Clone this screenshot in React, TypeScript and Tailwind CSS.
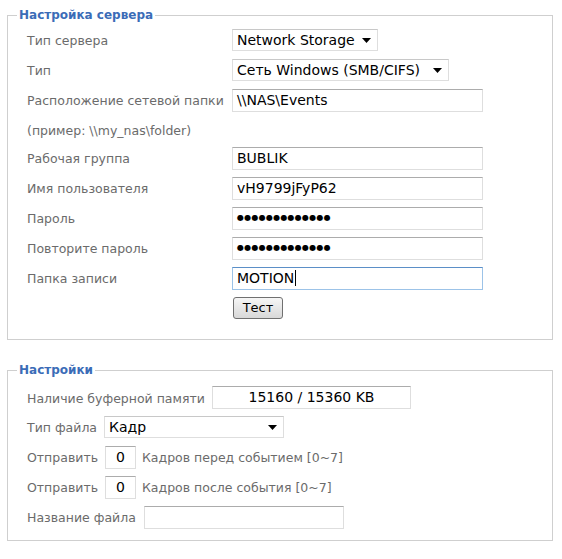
import React from "react";

const font = { fontFamily: '"DejaVu Sans", Verdana, sans-serif' };

function Caret() {
  return (
    <svg width="9" height="5" viewBox="0 0 9 5" className="shrink-0">
      <path d="M0 0h9L4.5 5z" fill="#000" />
    </svg>
  );
}

function Select({ value, className }: { value: string; className: string }) {
  return (
    <div
      className={`flex h-[22px] items-center justify-between border border-[#dedede] border-t-[#c8c8c8] bg-white pl-[4px] pr-[6px] text-[14px] text-black ${className}`}
    >
      <span className="whitespace-nowrap">{value}</span>
      <Caret />
    </div>
  );
}

function Field({
  children,
  className = "",
  focused = false,
}: {
  children?: React.ReactNode;
  className?: string;
  focused?: boolean;
}) {
  return (
    <div
      className={`flex h-[23px] items-center border bg-white px-[4px] text-[14px] text-black ${
        focused
          ? "border-[#9cc3e8] border-t-[#5b8fc7]"
          : "border-[#dedede] border-t-[#acacac]"
      } ${className}`}
    >
      {children}
    </div>
  );
}

function Dots() {
  return (
    <span className="text-[8px] leading-none tracking-[0.25px]">
      {"●●●●●●●●●●●●●"}
    </span>
  );
}

function Label({ w, children }: { w: string; children: React.ReactNode }) {
  return <span className={`${w} shrink-0 whitespace-nowrap pt-[3px]`}>{children}</span>;
}

function Row({ label, children }: { label: string; children: React.ReactNode }) {
  return (
    <div className="flex h-[30px] items-center">
      <Label w="w-[205px]">{label}</Label>
      {children}
    </div>
  );
}

function Legend({ children }: { children: React.ReactNode }) {
  return (
    <legend className="ml-[9px] px-[2px] text-[12px] font-bold leading-[16px] text-[#3b6cb7]">
      {children}
    </legend>
  );
}

export default function App() {
  return (
    <div className="min-h-[559px] bg-white pt-[7px] text-[12.5px] text-[#6b6b6b]" style={font}>
      <fieldset className="ml-[7px] w-[546px] border border-[#cfcfcf] pb-[16px]">
        <Legend>Настройка сервера</Legend>
        <div className="mt-[2px] flex flex-col pl-[19px]">
          <Row label="Тип сервера">
            <Select value="Network Storage" className="w-[146px]" />
          </Row>
          <Row label="Тип">
            <Select value="Сеть Windows (SMB/CIFS)" className="w-[217px]" />
          </Row>
          <Row label="Расположение сетевой папки">
            <Field className="w-[251px]">\\NAS\Events</Field>
          </Row>
          <div className="flex h-[28px] items-center pt-[5px]">(пример: \\my_nas\folder)</div>
          <Row label="Рабочая группа">
            <Field className="w-[251px]">BUBLIK</Field>
          </Row>
          <Row label="Имя пользователя">
            <Field className="w-[251px]">vH9799jFyP62</Field>
          </Row>
          <Row label="Пароль">
            <Field className="w-[251px]">
              <Dots />
            </Field>
          </Row>
          <Row label="Повторите пароль">
            <Field className="w-[251px]">
              <Dots />
            </Field>
          </Row>
          <Row label="Папка записи">
            <Field className="w-[251px]" focused>
              MOTION
              <span className="ml-[1px] inline-block h-[16px] w-px bg-black" />
            </Field>
          </Row>
          <div className="flex h-[30px] items-center pl-[206px]">
            <button className="h-[22px] w-[50px] rounded-[3px] border border-[#707070] bg-gradient-to-b from-[#f6f6f6] to-[#d8d8d8] text-[13px] text-black">
              Тест
            </button>
          </div>
        </div>
      </fieldset>

      <fieldset className="mt-[22px] ml-[7px] w-[546px] border border-[#cfcfcf] pb-[8px]">
        <Legend>Настройки</Legend>
        <div className="mt-[5px] flex flex-col pl-[19px]">
          <div className="flex h-[29px] items-center">
            <Label w="w-[185px]">Наличие буферной памяти</Label>
            <Field className="w-[199px] justify-center">15160 / 15360 KB</Field>
          </div>
          <div className="flex h-[30px] items-center">
            <Label w="w-[77px]">Тип файла</Label>
            <Select value="Кадр" className="w-[180px]" />
          </div>
          <div className="flex h-[30px] items-center">
            <Label w="w-[78px]">Отправить</Label>
            <Field className="w-[31px] justify-center">0</Field>
            <span className="ml-[6px] whitespace-nowrap pt-[3px]">Кадров перед событием [0~7]</span>
          </div>
          <div className="flex h-[30px] items-center">
            <Label w="w-[78px]">Отправить</Label>
            <Field className="w-[31px] justify-center">0</Field>
            <span className="ml-[6px] whitespace-nowrap pt-[3px]">Кадров после события [0~7]</span>
          </div>
          <div className="flex h-[30px] items-center">
            <Label w="w-[117px]">Название файла</Label>
            <Field className="w-[200px]" />
          </div>
        </div>
      </fieldset>
    </div>
  );
}
